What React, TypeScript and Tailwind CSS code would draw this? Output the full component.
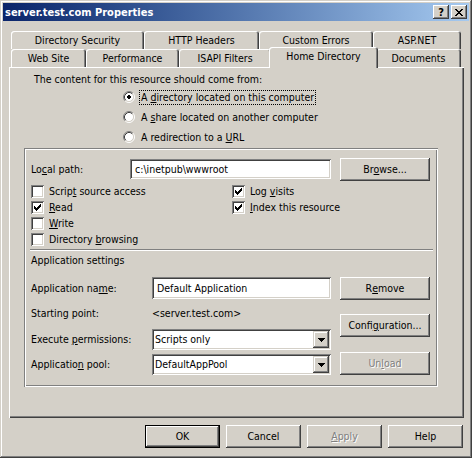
import React from 'react';

// classic 3D bevels
const raised = 'shadow-[inset_-1px_-1px_0_#404040,inset_1px_1px_0_#ffffff,inset_-2px_-2px_0_#808080]';
const raisedDefault =
  'shadow-[inset_0_0_0_1px_#000000,inset_-2px_-2px_0_#404040,inset_2px_2px_0_#ffffff,inset_-3px_-3px_0_#808080]';
const sunken = 'shadow-[inset_1px_1px_0_#808080,inset_-1px_-1px_0_#ffffff,inset_2px_2px_0_#404040,inset_-2px_-2px_0_#d4d0c8]';
const disabledText = 'text-[#808080] [text-shadow:1px_1px_0_#ffffff]';

function Button({
  children,
  className = '',
  disabled,
  isDefault
}: {
  children: React.ReactNode;
  className?: string;
  disabled?: boolean;
  isDefault?: boolean;
}) {
  return (
    <div
      className={`h-[23px] flex items-center justify-center bg-[#d4d0c8] ${isDefault ? raisedDefault : raised} ${
        disabled ? disabledText : ''
      } ${className}`}
    >
      {children}
    </div>
  );
}

function Tab({ label, className = '', selected }: { label: string; className?: string; selected?: boolean }) {
  if (selected) {
    return (
      <div
        className={`relative z-10 -mx-[2px] -mt-[2px] h-[21px] pt-[3px] flex justify-center bg-[#d4d0c8] rounded-t-[3px] shadow-[inset_1px_1px_0_#ffffff,inset_-1px_0_0_#404040,inset_-2px_0_0_#808080] ${className}`}
      >
        {label}
      </div>
    );
  }
  return (
    <div
      className={`h-[18px] pt-[3px] flex justify-center rounded-t-[3px] shadow-[inset_1px_1px_0_#ffffff,inset_-1px_0_0_#404040,inset_-2px_0_0_#808080] ${className}`}
    >
      {label}
    </div>
  );
}

function Radio({ checked, focused, children }: { checked?: boolean; focused?: boolean; children: React.ReactNode }) {
  return (
    <div className="h-[20px] flex items-center">
      <svg width="12" height="12" viewBox="0 0 12 12" className="shrink-0">
        <circle cx="6" cy="6" r="4.5" fill="#ffffff" />
        <path d="M2.11 9.89 A5.5 5.5 0 0 1 9.89 2.11" stroke="#808080" fill="none" />
        <path d="M9.89 2.11 A5.5 5.5 0 0 1 2.11 9.89" stroke="#ffffff" fill="none" />
        <path d="M2.82 9.18 A4.5 4.5 0 0 1 9.18 2.82" stroke="#404040" fill="none" />
        <path d="M9.18 2.82 A4.5 4.5 0 0 1 2.82 9.18" stroke="#d4d0c8" fill="none" />
        {checked && (
          <g fill="#000000" shapeRendering="crispEdges">
            <rect x="4" y="5" width="4" height="2" />
            <rect x="5" y="4" width="2" height="4" />
          </g>
        )}
      </svg>
      <span
        className={`ml-[4px] px-[1px] border leading-[13px] ${
          focused ? 'border-dotted border-black' : 'border-transparent'
        }`}
      >
        {children}
      </span>
    </div>
  );
}

function Check({ checked, children }: { checked?: boolean; children: React.ReactNode }) {
  return (
    <div className="h-[16px] flex items-center">
      <div className={`w-[13px] h-[13px] shrink-0 bg-white flex items-center justify-center ${sunken}`}>
        {checked && (
          <svg width="7" height="7" viewBox="0 0 7 7" shapeRendering="crispEdges" fill="#000000">
            <rect x="0" y="2" width="1" height="3" />
            <rect x="1" y="3" width="1" height="3" />
            <rect x="2" y="4" width="1" height="3" />
            <rect x="3" y="3" width="1" height="3" />
            <rect x="4" y="2" width="1" height="3" />
            <rect x="5" y="1" width="1" height="3" />
            <rect x="6" y="0" width="1" height="3" />
          </svg>
        )}
      </div>
      <span className="ml-[5px]">{children}</span>
    </div>
  );
}

function Combo({ value }: { value: string }) {
  return (
    <div className={`w-[179px] h-[21px] p-[2px] flex bg-white ${sunken}`}>
      <div className="flex-1 flex items-center pl-[1px]">{value}</div>
      <div
        className="w-[16px] h-full flex items-center justify-center bg-[#d4d0c8] shadow-[inset_-1px_-1px_0_#404040,inset_1px_1px_0_#d4d0c8,inset_-2px_-2px_0_#808080,inset_2px_2px_0_#ffffff]"
      >
        <svg width="7" height="4" viewBox="0 0 7 4" shapeRendering="crispEdges" fill="#000000">
          <rect x="0" y="0" width="7" height="1" />
          <rect x="1" y="1" width="5" height="1" />
          <rect x="2" y="2" width="3" height="1" />
          <rect x="3" y="3" width="1" height="1" />
        </svg>
      </div>
    </div>
  );
}

export default function App() {
  return (
    <div className="w-[472px] h-[458px] p-[3px] flex flex-col bg-[#d4d0c8] text-black text-[10.5px] leading-[13px] font-['DejaVu_Sans_Condensed','Liberation_Sans',sans-serif] select-none shadow-[inset_-1px_-1px_0_#404040,inset_1px_1px_0_#d4d0c8,inset_-2px_-2px_0_#808080,inset_2px_2px_0_#ffffff]">
      {/* title bar */}
      <div className="h-[18px] shrink-0 flex items-center pl-[2px] pr-[2px] bg-linear-to-r from-[#0a246a] to-[#a6caf0]">
        <span className="flex-1 text-white font-bold text-[11px]">server.test.com Properties</span>
        <div className={`w-[16px] h-[14px] flex items-center justify-center bg-[#d4d0c8] font-bold text-[11px] ${raised}`}>
          ?
        </div>
        <div className={`ml-[2px] w-[16px] h-[14px] flex items-center justify-center bg-[#d4d0c8] ${raised}`}>
          <svg width="8" height="7" viewBox="0 0 8 7" shapeRendering="crispEdges" fill="#000000">
            <rect x="0" y="0" width="2" height="1" />
            <rect x="6" y="0" width="2" height="1" />
            <rect x="1" y="1" width="2" height="1" />
            <rect x="5" y="1" width="2" height="1" />
            <rect x="2" y="2" width="4" height="1" />
            <rect x="3" y="3" width="2" height="1" />
            <rect x="2" y="4" width="4" height="1" />
            <rect x="1" y="5" width="2" height="1" />
            <rect x="5" y="5" width="2" height="1" />
            <rect x="0" y="6" width="2" height="1" />
            <rect x="6" y="6" width="2" height="1" />
          </svg>
        </div>
      </div>

      <div className="flex-1 flex flex-col pl-[6px] pr-[5px] pt-[10px]">
        {/* tabs */}
        <div className="ml-[2px] h-[18px] flex">
          <Tab label="Directory Security" className="w-[133px]" />
          <Tab label="HTTP Headers" className="w-[115px]" />
          <Tab label="Custom Errors" className="w-[114px]" />
          <Tab label="ASP.NET" className="w-[88px]" />
        </div>
        <div className="ml-[2px] h-[18px] flex items-start">
          <Tab label="Web Site" className="w-[75px]" />
          <Tab label="Performance" className="w-[93px]" />
          <Tab label="ISAPI Filters" className="w-[92px]" />
          <Tab label="Home Directory" className="w-[109px]" selected />
          <Tab label="Documents" className="w-[85px]" />
        </div>

        {/* page */}
        <div className="h-[351px] flex flex-col shadow-[inset_1px_1px_0_#ffffff,inset_-1px_-1px_0_#404040,inset_-2px_-2px_0_#808080]">
          <div className="pl-[25px] pt-[6px]">The content for this resource should come from:</div>
          <div className="mt-[1px] pl-[114px] flex flex-col">
            <Radio checked focused>
              A <u>d</u>irectory located on this computer
            </Radio>
            <Radio>
              A <u>s</u>hare located on another computer
            </Radio>
            <Radio>
              A redirection to a <u>U</u>RL
            </Radio>
          </div>

          <div className="ml-[15px] mt-[1px] w-[414px] h-[239px] pl-[7px] flex flex-col shadow-[inset_1px_1px_0_#808080,inset_-1px_-1px_0_#ffffff,inset_2px_2px_0_#ffffff,inset_-2px_-2px_0_#808080]">
            <div className="mt-[10px] h-[23px] flex items-start">
              <div className="w-[99px] h-[23px] flex items-center">
                Lo<u>c</u>al path:
              </div>
              <div className={`mt-[1px] w-[201px] h-[20px] pl-[5px] flex items-center bg-white ${sunken}`}>
                {'c:\\inetpub\\wwwroot'}
              </div>
              <Button className="ml-[9px] w-[90px]">
                Br<u>o</u>wse...
              </Button>
            </div>

            <div className="mt-[2px] flex">
              <div className="w-[201px] flex flex-col">
                <Check>
                  Scrip<u>t</u> source access
                </Check>
                <Check checked>
                  <u>R</u>ead
                </Check>
                <Check>
                  <u>W</u>rite
                </Check>
                <Check>
                  Directory <u>b</u>rowsing
                </Check>
              </div>
              <div className="flex flex-col">
                <Check checked>
                  Log <u>v</u>isits
                </Check>
                <Check checked>
                  <u>I</u>ndex this resource
                </Check>
              </div>
            </div>

            <div className="mt-[2px] -ml-[1px] mr-[5px] h-[2px] border-t border-b border-t-[#808080] border-b-white" />

            <div className="mt-[3px]">Application settings</div>

            <div className="mt-[10px] flex">
              <div className="w-[300px] flex flex-col">
                <div className="h-[22px] flex items-center">
                  <div className="w-[121px]">
                    Application na<u>m</u>e:
                  </div>
                  <div className={`w-[179px] h-[22px] pl-[5px] flex items-center bg-white ${sunken}`}>
                    Default Application
                  </div>
                </div>
                <div className="mt-[7px] h-[14px] flex items-center">
                  <div className="w-[121px]">Starting point:</div>
                  <div>{'<server.test.com>'}</div>
                </div>
                <div className="mt-[9px] h-[21px] flex items-center">
                  <div className="w-[121px]">
                    Execute <u>p</u>ermissions:
                  </div>
                  <Combo value="Scripts only" />
                </div>
                <div className="mt-[4px] h-[21px] flex items-center">
                  <div className="w-[121px]">
                    Applicatio<u>n</u> pool:
                  </div>
                  <Combo value="DefaultAppPool" />
                </div>
              </div>
              <div className="ml-[9px] flex flex-col">
                <Button className="w-[90px]">
                  R<u>e</u>move
                </Button>
                <Button className="mt-[14px] w-[90px]">
                  Confi<u>g</u>uration...
                </Button>
                <Button className="mt-[15px] w-[90px]" disabled>
                  Un<u>l</u>oad
                </Button>
              </div>
            </div>
          </div>
        </div>

        {/* dialog buttons */}
        <div className="mt-[7px] pr-[1px] flex justify-end gap-[6px]">
          <Button className="w-[75px]" isDefault>
            OK
          </Button>
          <Button className="w-[75px]">Cancel</Button>
          <Button className="w-[75px]" disabled>
            <u>A</u>pply
          </Button>
          <Button className="w-[75px]">Help</Button>
        </div>
      </div>
    </div>
  );
}
